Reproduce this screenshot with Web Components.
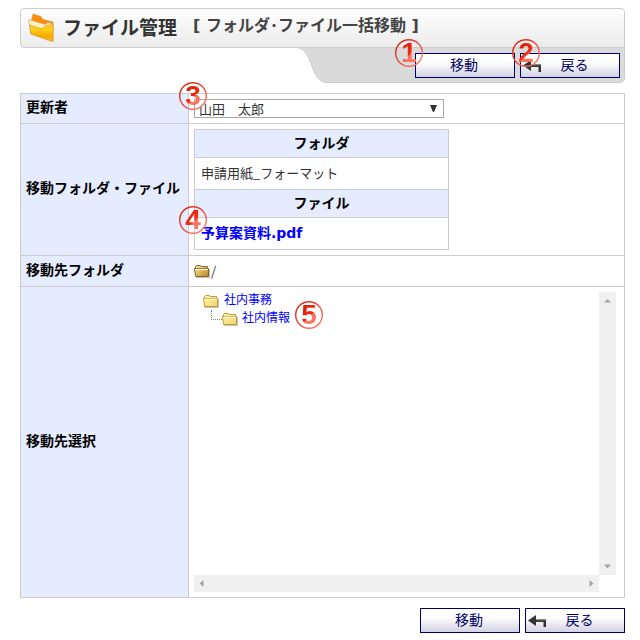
<!DOCTYPE html>
<html lang="ja">
<head>
<meta charset="utf-8">
<title>ファイル管理</title>
<style>
body { margin: 8px 15px 7px 20px; background: #fff; color: #333; font: 13px/20px "Noto Sans CJK JP", sans-serif; }
</style>
</head>
<body>
<file-manager></file-manager>
<script>
const define = (name, html) => customElements.define(name, class extends HTMLElement {
  constructor() {
    super();
    this.attachShadow({ mode: 'open' }).innerHTML = html;
  }
});

define('step-badge', `<style>
  :host { display: block; position: absolute; z-index: 2; width: 28px; height: 28px; pointer-events: none; }
  svg { position: absolute; inset: 0; }
  span { display: block; position: relative; font: bold 28px/28px "Liberation Sans", sans-serif; text-align: center;
    background: linear-gradient(135deg, #d81c08 15%, #f02a10 52%, #fb7460 56%); -webkit-background-clip: text;
    background-clip: text; color: transparent; }
</style>
<svg width="28" height="28" viewBox="0 0 28 28" aria-hidden="true"><defs><linearGradient id="g" x1="0" y1="0" x2="1" y2="1"><stop offset="0" stop-color="#d51c08"/><stop offset="1" stop-color="#ff8070"/></linearGradient></defs><circle cx="14" cy="14" r="13.3" fill="none" stroke="url(#g)" stroke-width="1.4"/></svg>
<span><slot></slot></span>`);

class ActionButton extends HTMLElement {
  connectedCallback() {
    const back = this.hasAttribute('back');
    this.attachShadow({ mode: 'open' }).innerHTML = `<style>
      :host { display: block; position: relative; width: 100px; }
      button { display: flex; align-items: center; justify-content: center; width: 100%; height: 25px; margin: 0;
        padding: 0 2px; border: 1px solid #006; border-radius: 0; color: #006; font: 14px/20px "Noto Sans CJK JP", sans-serif;
        background: linear-gradient(#fff 35%, #d2d2e4); }
      svg { flex: none; }
      span { flex: 1; text-align: center; padding: 0 2px 3px 0; }
      button.back span { padding-right: 10px; }
      ::slotted(step-badge) { top: -14px; left: var(--badge-left, -20px); }
    </style>
    <button type="button" class="${back ? 'back' : ''}">${back ? `<svg width="19" height="13" viewBox="0 0 19 13" aria-hidden="true"><path d="M0 6.500L8 1V5.500H18V13H15.500V8H8V12Z" fill="#333"/><path d="M9 6H17" stroke="#777"/></svg>` : ''}<span>${this.getAttribute('label')}</span></button><slot></slot>`;
  }
}
customElements.define('action-button', ActionButton);

define('page-header', `<style>
  :host { display: block; }
  header { display: flex; align-items: center; height: 38px; padding-left: 7px; border: 1px solid #ccc;
    border-radius: 4px 4px 0 4px; background: linear-gradient(#fefefe, #ebebeb); }
  h1 { margin: 0 0 0 9px; padding-bottom: 2px; font-size: 19px; line-height: 34px; color: #333; }
  h2 { margin: 0 0 0 16px; padding-bottom: 4px; font-size: 16px; line-height: 34px; color: #444;
    font-family: "DejaVu Sans", "Noto Sans CJK JP", sans-serif; }
  .row { display: flex; justify-content: flex-end; margin-top: -1px; }
  .curve { flex: none; }
  .tab { display: flex; gap: 5px; box-sizing: border-box; height: 36px; padding: 5px 4px 0 88px;
    background: #dadada; border: solid #ccc; border-width: 1px 1px 1px 0; border-radius: 0 0 5px 0; }
</style>
<header>
  <svg width="26" height="30" viewBox="0 0 26 30" aria-hidden="true"><defs><linearGradient id="f" x1="0" y1="0" x2="0" y2="1"><stop offset=".3" stop-color="#ffcc18"/><stop offset=".7" stop-color="#f8a800"/><stop offset="1" stop-color="#fcc010"/></linearGradient></defs>
    <path d="M3 9L5 1 13 3.500 15 6.500 25 9V20L4 18Z" fill="#ff8a10" stroke="#d98a3a" stroke-width=".6"/>
    <path d="M.5 6.500L17 11.500 20 9.500 25 11V28.500L3 21Z" fill="#fff0c4" stroke="#c9a870" stroke-width=".6"/>
    <path d="M1.500 12L14 16 18 12.500 25 11.500V28.500L3 21Z" fill="url(#f)" stroke="#d89018" stroke-width=".6"/></svg>
  <h1>ファイル管理</h1><h2>[ フォルダ･ファイル一括移動 ]</h2>
</header>
<div class="row">
  <svg class="curve" width="31" height="36" viewBox="0 0 31 36" aria-hidden="true"><path d="M0 .5C18 1 13 35.500 31 35.500V.5Z" fill="#dadada"/><path d="M31 .5H0C18 1 13 35.500 31 35.500" fill="none" stroke="#ccc"/></svg>
  <div class="tab"><slot></slot></div>
</div>`);

define('user-select', `<style>
  :host { display: block; position: relative; width: 250px; max-width: 100%; }
  select { display: block; appearance: none; box-sizing: border-box; width: 100%; height: 19px; margin: 0; padding: 0 4px;
    border: 1px solid #a9a9a9; border-radius: 0; color: #333; font: 13px/17px "Noto Sans CJK JP", sans-serif;
    background: url("data:image/svg+xml,%3Csvg xmlns='http://www.w3.org/2000/svg' width='7' height='7'%3E%3Cpath d='M0 0h7L4 7H3z' fill='%23333'/%3E%3C/svg%3E") no-repeat right 6px top 5px #fff; }
  ::slotted(step-badge) { left: -15px; top: -17px; }
</style><select aria-label="更新者"><option>山田　太郎</option></select><slot></slot>`);

define('target-table', `<style>
  :host { display: block; position: relative; width: 255px; max-width: 100%; }
  table { width: 100%; border-collapse: collapse; }
  th, td { box-sizing: border-box; border: 1px solid #ccc; padding: 0 6px 4px; }
  th { height: 28px; background: #e6ecff; color: #000; font-size: 14px; }
  td { height: 32px; padding-bottom: 2px; }
  a { color: #00f; text-decoration: none; font: bold 14px/20px "Noto Sans CJK JP", sans-serif; }
  a span { font-family: "DejaVu Sans", sans-serif; }
  ::slotted(step-badge) { left: -15px; top: 77px; }
</style><table><tbody><tr><th>フォルダ</th></tr><tr><td>申請用紙_フォーマット</td></tr><tr><th>ファイル</th></tr><tr><td><a href="#">予算案資料<span>.pdf</span></a></td></tr></tbody></table><slot></slot>`);

define('folder-icon', `<style>:host { display: block; flex: none; width: 17px; height: 14px; } svg { display: block; }</style>
<svg width="17" height="14" viewBox="0 0 17 14" aria-hidden="true"><defs><linearGradient id="f" x1="0" y1="0" x2="1" y2="1"><stop offset="0" stop-color="var(--folder-light, #fff6b0)"/><stop offset="1" stop-color="var(--folder-dark, #f2d368)"/></linearGradient></defs>
<path d="M2 13.500H15.500V5" fill="none" stroke="#999" opacity=".6"/>
<path d="M1.500 12.500L.5 4.500H1.500V2.500L2.500 1.500H6L7.500 2.500H13.500V4.500H14.500V12.500Z" fill="url(#f)" stroke="var(--folder-line, #c09a34)"/><path d="M1.500 5.500H14" stroke="#fffbd8"/><path d="M1 4.500H14" stroke="var(--folder-line, #d0aa48)" opacity=".7"/></svg>`);

define('folder-tree', `<style>
  :host { display: grid; grid-template: minmax(283px, auto) 17px / 1fr 17px; }
  .view { padding-left: 9px; font-size: 12px; line-height: 18px; }
  .v, .h { display: flex; justify-content: space-between; align-items: center; background: #f0f0f0; }
  .v { flex-direction: column; padding: 6px 0; }
  .h { padding: 0 5px; }
  ul { list-style: none; margin: 0; padding: 0; }
  .item { display: flex; align-items: center; gap: 4px; height: 18px; }
  li li { display: flex; }
  li li .item { gap: 3px; }
  .branch { width: 10px; height: 9px; margin-left: 8px; border: dotted #888; border-width: 0 0 1px 1px; }
  a { padding-bottom: 4px; color: #00f; text-decoration: none; }
  .mark { position: relative; align-self: flex-start; }
  ::slotted(step-badge) { left: 2px; top: -9px; }
</style>
<div class="view"><ul><li><div class="item"><folder-icon></folder-icon><a href="#">社内事務</a></div>
<ul><li><span class="branch"></span><div class="item"><folder-icon></folder-icon><a href="#">社内情報</a><span class="mark"><slot></slot></span></div></li></ul></li></ul></div>
<div class="v"><svg width="7" height="5" aria-hidden="true"><path d="M0 4.500L3.500 1 7 4.500Z" fill="#a3a3a3"/></svg><svg width="7" height="5" aria-hidden="true"><path d="M0 .5L3.500 4.500 7 .5Z" fill="#a3a3a3"/></svg></div>
<div class="h"><svg width="5" height="7" aria-hidden="true"><path d="M4.500 0L.5 3.500 4.500 7Z" fill="#a3a3a3"/></svg><svg width="5" height="7" aria-hidden="true"><path d="M.5 0L4.500 3.500 .5 7Z" fill="#a3a3a3"/></svg></div>`);

define('file-manager', `<style>
  :host { display: block; }
  table { width: 100%; margin-top: 10px; border-collapse: collapse; }
  th, td { border: 1px solid #ccc; padding: 5px; }
  th { width: 157px; padding: 2px 5px 7px; background: #e6ecff; color: #000; font-size: 14px; text-align: left; white-space: nowrap; }
  td { padding-right: 8px; }
  .path { display: flex; align-items: center; --folder-light: #fff0a8; --folder-dark: #b88420; --folder-line: #86642a; }
  .path span { padding-bottom: 2px; }
  footer { display: flex; justify-content: flex-end; gap: 5px; margin-top: 10px; }
</style>
<page-header>
  <action-button label="移動"><step-badge>1</step-badge></action-button>
  <action-button label="戻る" back style="--badge-left: -8px"><step-badge>2</step-badge></action-button>
</page-header>
<table><tbody>
<tr><th scope="row">更新者</th><td><user-select><step-badge>3</step-badge></user-select></td></tr>
<tr><th scope="row">移動フォルダ・ファイル</th><td><target-table><step-badge>4</step-badge></target-table></td></tr>
<tr><th scope="row">移動先フォルダ</th><td><div class="path"><folder-icon></folder-icon>/</div></td></tr>
<tr><th scope="row">移動先選択</th><td><folder-tree><step-badge>5</step-badge></folder-tree></td></tr>
</tbody></table>
<footer><action-button label="移動"></action-button><action-button label="戻る" back></action-button></footer>`);
</script>
</body>
</html>
